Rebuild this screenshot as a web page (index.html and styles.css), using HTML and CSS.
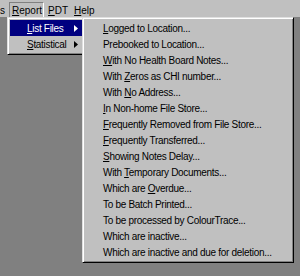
FILE: index.html
```html
<!DOCTYPE html>
<html>
<head>
<meta charset="utf-8">
<link rel="stylesheet" href="styles.css">
</head>
<body>
<div class="screen">
  <div class="menubar">
    <span class="mb-item mb-cut"><span>Tools</span></span>
    <span class="mb-item mb-open"><u>R</u>eport</span>
    <span class="mb-item"><u>P</u>DT</span>
    <span class="mb-item"><u>H</u>elp</span>
  </div>

  <div class="menu menu-report">
    <div class="mi mi-hl"><span><u>L</u>ist Files</span><svg class="arrow" width="4" height="7" viewBox="0 0 4 7"><path d="M0 0L4 3.5L0 7Z" fill="#fff"/></svg></div>
    <div class="mi"><span><u>S</u>tatistical</span><svg class="arrow" width="4" height="7" viewBox="0 0 4 7"><path d="M0 0L4 3.5L0 7Z" fill="#000"/></svg></div>
  </div>

  <div class="menu menu-list">
    <div class="mi"><span><u>L</u>ogged to Location...</span></div>
    <div class="mi"><span>Prebooked to Location...</span></div>
    <div class="mi"><span><u>W</u>ith No Health Board Notes...</span></div>
    <div class="mi"><span>With <u>Z</u>eros as CHI number...</span></div>
    <div class="mi"><span>With <u>N</u>o Address...</span></div>
    <div class="mi"><span><u>I</u>n Non-home File Store...</span></div>
    <div class="mi"><span><u>F</u>requently Removed from File Store...</span></div>
    <div class="mi"><span><u>F</u>requently Transferred...</span></div>
    <div class="mi"><span><u>S</u>howing Notes Delay...</span></div>
    <div class="mi"><span>With <u>T</u>emporary Documents...</span></div>
    <div class="mi"><span>Which are <u>O</u>verdue...</span></div>
    <div class="mi"><span>To be Batch Printed...</span></div>
    <div class="mi"><span>To be processed by ColourTrace...</span></div>
    <div class="mi"><span>Which are inactive...</span></div>
    <div class="mi"><span>Which are inactive and due for deletion...</span></div>
  </div>
</div>
</body>
</html>
```

FILE: styles.css
```css
html, body {
  margin: 0;
  padding: 0;
}
body {
  background: #808080;
  font-family: "Liberation Sans", Arial, sans-serif;
  font-size: 10px;
  letter-spacing: -0.3px;
  color: #000;
}
.screen {
  position: relative;
  width: 300px;
  height: 276px;
  overflow: hidden;
  background: #808080;
}
.menubar {
  height: 17px;
  background: #c0c0c0;
  display: flex;
  align-items: flex-start;
  letter-spacing: 0;
}
.mb-item {
  box-sizing: border-box;
  height: 16px;
  margin-top: 2px;
  line-height: 15px;
  padding: 0 1px 0 3px;
  border: 1px solid transparent;
  white-space: nowrap;
}
.mb-cut {
  width: 9px;
  padding: 0 4px 0 0;
  border: 0;
  display: flex;
  justify-content: flex-end;
  overflow: hidden;
  line-height: 17px;
}
.mb-open {
  border-color: #808080 #fff #fff #808080;
  padding: 0 1px 0 2px;
}
u {
  text-decoration: underline;
  text-underline-offset: 1px;
}
.menu {
  position: absolute;
  top: 17px;
  background: #c0c0c0;
  border: 1px solid;
  border-color: #dfdfdf #000 #000 #dfdfdf;
  box-shadow: inset 1px 1px 0 #fff, inset -1px -1px 0 #808080;
  padding: 2px;
}
.menu-report {
  left: 7px;
  width: 72px;
}
.menu-list {
  left: 82px;
  width: 206px;
}
.mi {
  height: 16px;
  display: flex;
  align-items: center;
  padding-left: 18px;
  padding-top: 1px;
  box-sizing: border-box;
  white-space: nowrap;
}
.menu-report .mi {
  padding-left: 17px;
}
.mi-hl {
  background: #000080;
  color: #fff;
}
.arrow {
  margin-left: auto;
  margin-right: 4px;
  flex: none;
}
```
